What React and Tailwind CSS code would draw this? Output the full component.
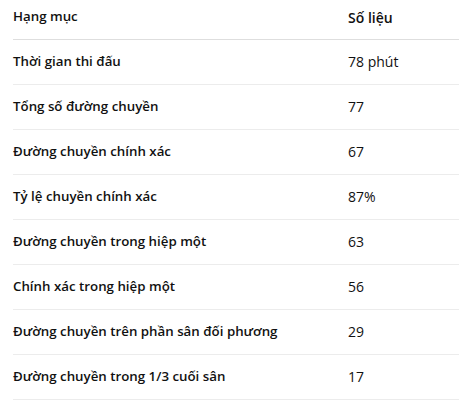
import React from 'react';

const rows = [
  ['Thời gian thi đấu', '78 phút'],
  ['Tổng số đường chuyền', '77'],
  ['Đường chuyền chính xác', '67'],
  ['Tỷ lệ chuyền chính xác', '87%'],
  ['Đường chuyền trong hiệp một', '63'],
  ['Chính xác trong hiệp một', '56'],
  ['Đường chuyền trên phần sân đối phương', '29'],
  ['Đường chuyền trong 1/3 cuối sân', '17'],
];

export default function App() {
  return (
    <div className="bg-white pl-[13px] text-[14px] text-[#111111]" style={{ fontFamily: '"Open Sans", "Noto Sans", sans-serif' }}>
      <table className="w-full border-collapse">
        <thead>
          <tr className="border-b border-[#dedede]">
            <th className="h-[39px] w-[335px] pb-[4px] text-left text-[13.3px] font-semibold">Hạng mục</th>
            <th className="pb-[4px] text-left font-semibold">Số liệu</th>
          </tr>
        </thead>
        <tbody>
          {rows.map(([name, value]) => (
            <tr key={name} className="border-b border-[#ececec]">
              <td className="h-[45px] text-[13.3px] font-semibold">{name}</td>
              <td>{value}</td>
            </tr>
          ))}
        </tbody>
      </table>
    </div>
  );
}
